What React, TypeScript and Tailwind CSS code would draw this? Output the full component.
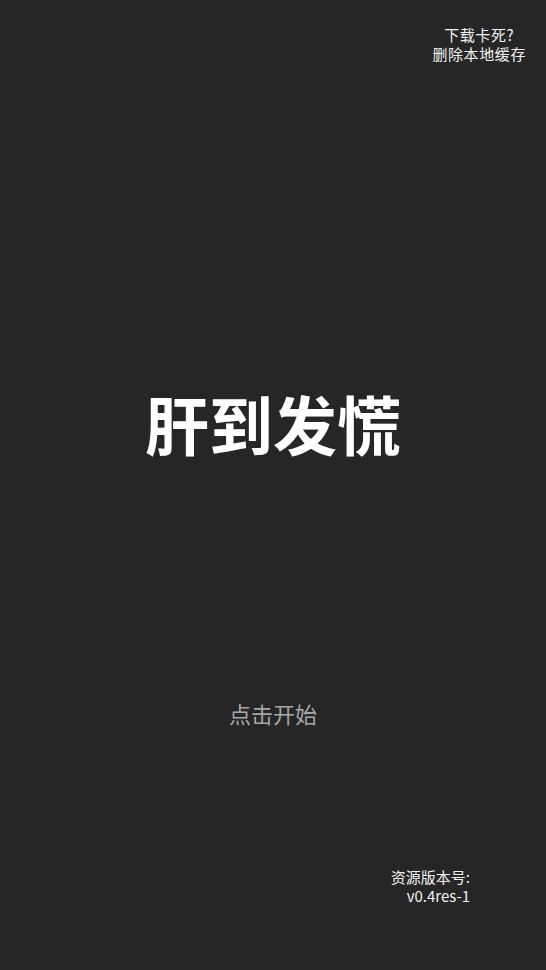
import React from 'react';

const font = { fontFamily: '"Noto Sans CJK SC", "Liberation Sans", sans-serif' };

export default function App() {
  return (
    <div
      className="w-full h-[970px] bg-[#262626] flex flex-col text-white overflow-hidden"
      style={font}
    >
      {/* 右上角：清除缓存 */}
      <div className="flex justify-end pt-[25px] pr-[20px]">
        <button className="flex flex-col items-center text-[15px] leading-[19px] tracking-[0.6px] text-[#f2f2f2]">
          <span>下载卡死?</span>
          <span>删除本地缓存</span>
        </button>
      </div>

      {/* 标题 */}
      <div className="mt-[321px] flex justify-center">
        <h1 className="text-[64px] leading-[76px] font-semibold">肝到发慌</h1>
      </div>

      {/* 开始 */}
      <div className="mt-[238px] flex justify-center">
        <span className="text-[22px] leading-[30px] text-[#a6a6a6]">点击开始</span>
      </div>

      {/* 版本号 */}
      <div className="mt-[139px] flex justify-end pr-[76px]">
        <div className="flex flex-col items-end text-[15px] leading-[19px] text-[#f2f2f2]">
          <span>资源版本号:</span>
          <span>v0.4res-1</span>
        </div>
      </div>
    </div>
  );
}
